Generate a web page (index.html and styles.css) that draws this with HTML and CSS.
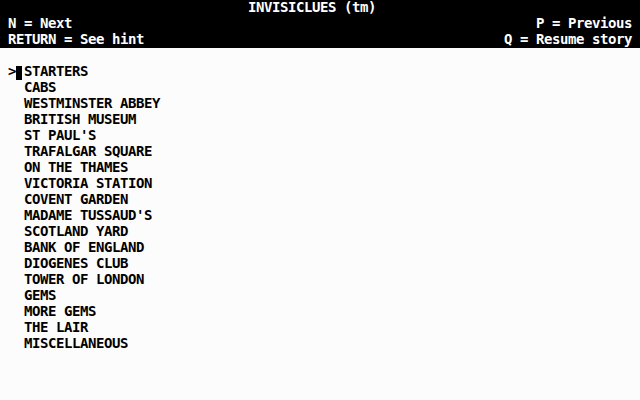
FILE: index.html
```html
<!DOCTYPE html>
<html>
<head>
<meta charset="utf-8">
<link rel="stylesheet" href="styles.css">
</head>
<body>
<div class="screen">
  <header class="status">
    <div class="row title">INVISICLUES (tm)</div>
    <div class="row split"><span>N = Next</span><span>P = Previous</span></div>
    <div class="row split"><span>RETURN = See hint</span><span>Q = Resume story</span></div>
  </header>
  <ul class="menu">
    <li class="item current"><span class="marker"><span class="arrow">&gt;</span><span class="cursor"></span></span><span>STARTERS</span></li>
    <li class="item"><span class="marker"></span><span>CABS</span></li>
    <li class="item"><span class="marker"></span><span>WESTMINSTER ABBEY</span></li>
    <li class="item"><span class="marker"></span><span>BRITISH MUSEUM</span></li>
    <li class="item"><span class="marker"></span><span>ST PAUL'S</span></li>
    <li class="item"><span class="marker"></span><span>TRAFALGAR SQUARE</span></li>
    <li class="item"><span class="marker"></span><span>ON THE THAMES</span></li>
    <li class="item"><span class="marker"></span><span>VICTORIA STATION</span></li>
    <li class="item"><span class="marker"></span><span>COVENT GARDEN</span></li>
    <li class="item"><span class="marker"></span><span>MADAME TUSSAUD'S</span></li>
    <li class="item"><span class="marker"></span><span>SCOTLAND YARD</span></li>
    <li class="item"><span class="marker"></span><span>BANK OF ENGLAND</span></li>
    <li class="item"><span class="marker"></span><span>DIOGENES CLUB</span></li>
    <li class="item"><span class="marker"></span><span>TOWER OF LONDON</span></li>
    <li class="item"><span class="marker"></span><span>GEMS</span></li>
    <li class="item"><span class="marker"></span><span>MORE GEMS</span></li>
    <li class="item"><span class="marker"></span><span>THE LAIR</span></li>
    <li class="item"><span class="marker"></span><span>MISCELLANEOUS</span></li>
  </ul>
</div>
</body>
</html>
```
FILE: styles.css
```css
html, body {
  margin: 0;
  padding: 0;
  background: #fcfcfc;
}
.screen {
  width: 640px;
  height: 400px;
  background: #fcfcfc;
  color: #000;
  font-family: "DejaVu Sans Mono", "Liberation Mono", monospace;
  font-weight: bold;
  font-size: 14px;
  line-height: 14px;
  letter-spacing: -0.43px;
  overflow: hidden;
}
.status {
  background: #000;
  color: #fff;
  height: 48px;
}
.row {
  height: 16px;
  white-space: pre;
}
.title {
  text-align: center;
  padding-right: 16px;
}
.split {
  display: flex;
  justify-content: space-between;
  padding: 0 8px;
}
.menu {
  list-style: none;
  margin: 0;
  padding: 16px 0 0 8px;
}
.item {
  display: flex;
  height: 16px;
  white-space: pre;
}
.marker {
  width: 16px;
  height: 16px;
  display: flex;
  align-items: stretch;
}
.arrow {
  width: 8px;
}
.cursor {
  width: 6px;
  margin-top: 2px;
  background: #000;
}
```
